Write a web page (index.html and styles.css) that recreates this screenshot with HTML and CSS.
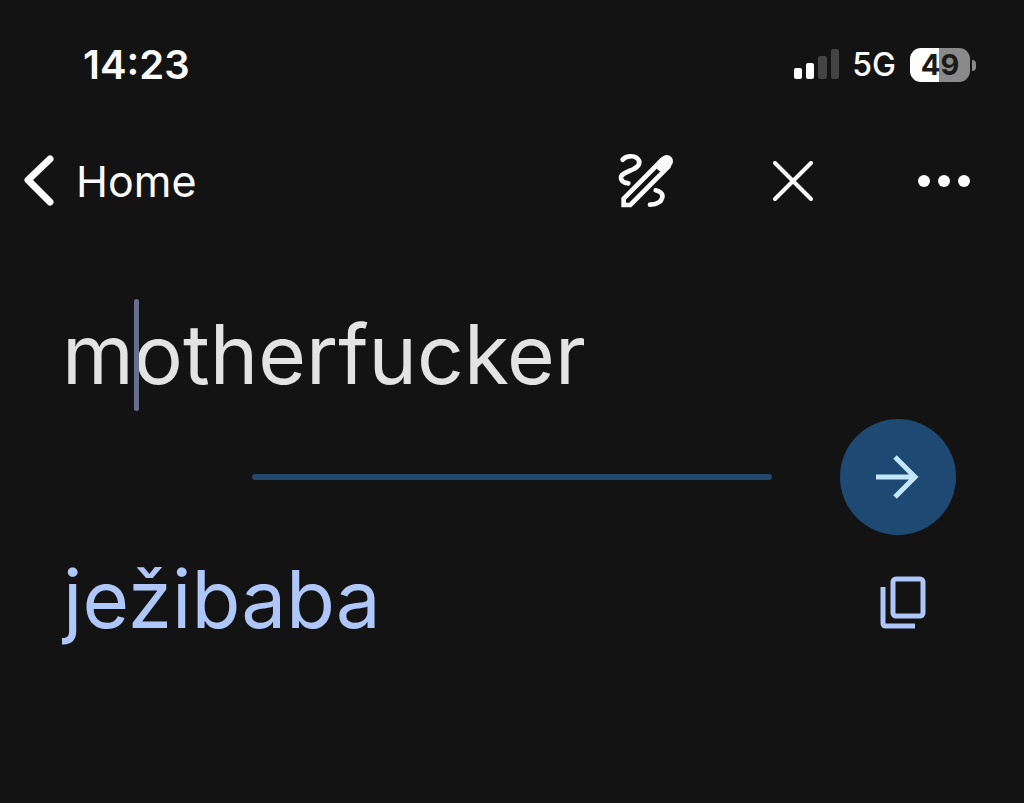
FILE: index.html
```html
<!DOCTYPE html>
<html lang="en">
<head>
  <meta charset="UTF-8" />
  <meta name="viewport" content="width=device-width, initial-scale=1.0"/>
  <title>Translate</title>
  <link rel="stylesheet" href="styles.css">
</head>
<body>

  <div class="status-bar">
    <time class="clock">14:23</time>
    <div class="status-icons">
      <svg class="signal" viewBox="0 0 46 32" aria-hidden="true">
        <rect x="0" y="19" width="8" height="11" rx="2" fill="#fff"/>
        <rect x="12" y="14" width="8" height="16" rx="2" fill="#fff"/>
        <rect x="24" y="7" width="9" height="23" rx="2" fill="#444"/>
        <rect x="37" y="0" width="8" height="30" rx="2" fill="#444"/>
      </svg>
      <span class="network">5G</span>
      <span class="battery">49</span>
    </div>
  </div>

  <nav class="nav-bar">
    <a class="back-link" href="#">
      <svg class="chevron" viewBox="0 0 32 52" aria-hidden="true">
        <path d="M28 4 L6 25 L28 47"/>
      </svg>
      Home
    </a>
    <button class="icon-btn" aria-label="Handwriting">
      <svg class="pen" viewBox="45 33 180 180" aria-hidden="true">
        <path d="M68 59 C78 48 99 46 109 53 C124 64 119 79 101 87 C82 96 62 101 63 114 C64 124 74 129 85 130"/>
        <path d="M167 151 C181 154 189 162 187 172 C184 187 169 193 150 194"/>
        <path class="pencil" d="M186 60 L71 176 V195 H91 L206 79"/>
        <path class="tip" d="M187 76 L200 64"/>
      </svg>
    </button>
    <button class="icon-btn" aria-label="Clear">
      <svg class="cross" viewBox="0 0 40 40" aria-hidden="true">
        <path d="M2 2 L38 38 M38 2 L2 38"/>
      </svg>
    </button>
    <button class="icon-btn" aria-label="More">
      <svg class="dots" viewBox="0 0 52 12" aria-hidden="true">
        <circle cx="6" cy="6" r="6"/>
        <circle cx="26" cy="6" r="6"/>
        <circle cx="46" cy="6" r="6"/>
      </svg>
    </button>
  </nav>

  <main>
    <div class="source">
      <input class="source-text" type="text" value="motherfucker" aria-label="Text to translate">
      <span class="caret"></span>
    </div>

    <div class="divider-row">
      <hr class="divider">
      <button class="go-btn" aria-label="Translate">
        <svg class="arrow" viewBox="0 0 44 44" aria-hidden="true">
          <path d="M0 22 H38 M19 2 L39 22 L19 42"/>
        </svg>
      </button>
    </div>

    <div class="result">
      <p class="result-text" lang="sk">ježibaba</p>
      <button class="copy-btn" aria-label="Copy translation">
        <svg class="copy" viewBox="0 0 46 54" aria-hidden="true">
          <rect x="13" y="4" width="30" height="37" rx="3"/>
          <path d="M3 12 V48 Q3 51 6 51 H35"/>
        </svg>
      </button>
    </div>
  </main>

</body>
</html>
```
FILE: styles.css
```css
:root {
  --bg-color: #131313;
  --text-color: #e3e3e3;
  --icon-color: #fafafa;
  --accent: #1d4973;
  --accent-text: #c2e7ff;
  --result-color: #aec6f8;
}

* { box-sizing: border-box; margin: 0; padding: 0; }

body {
  font-family: Inter, sans-serif;
  background: var(--bg-color);
  color: var(--icon-color);
  min-height: 100vh;
}

button {
  background: none;
  border: none;
  cursor: pointer;
}

svg {
  display: block;
  fill: none;
  stroke: currentColor;
}

.status-bar {
  display: flex;
  align-items: center;
  justify-content: space-between;
  height: 129px;
  padding: 0 48px 0 83px;
}

.clock {
  font-size: 40px;
  font-weight: 600;
}

.status-icons {
  display: flex;
  align-items: center;
  gap: 14px;
}

.signal {
  width: 46px;
  height: 32px;
  margin-right: -2px;
  stroke: none;
}

.network {
  font-size: 32px;
  font-weight: 500;
}

.battery {
  position: relative;
  width: 60px;
  height: 34px;
  margin-right: 6px;
  border-radius: 11px;
  background: linear-gradient(to right, #fff 49%, #8a8a8a 49%);
  color: #1a1a1a;
  font-size: 29px;
  font-weight: 700;
  line-height: 34px;
  text-align: center;
}

.battery::after {
  content: "";
  position: absolute;
  top: 12px;
  right: -6px;
  width: 4px;
  height: 11px;
  border-radius: 0 4px 4px 0;
  background: #8a8a8a;
}

.nav-bar {
  display: flex;
  align-items: center;
  height: 104px;
  padding: 0 30px 0 22px;
}

.back-link {
  display: flex;
  align-items: center;
  gap: 22px;
  margin-right: auto;
  color: var(--icon-color);
  font-size: 43px;
  text-decoration: none;
}

.chevron {
  width: 32px;
  height: 52px;
  stroke-width: 7;
  stroke-linecap: round;
  stroke-linejoin: round;
}

.icon-btn {
  display: flex;
  align-items: center;
  justify-content: center;
  width: 100px;
  height: 60px;
  margin-left: 48px;
  color: var(--icon-color);
}

.icon-btn:last-child { margin-left: 51px; }

.pen {
  width: 60px;
  height: 60px;
  stroke-width: 14;
  stroke-linecap: round;
}

.tip { stroke-width: 38; }

.cross {
  width: 40px;
  height: 40px;
  stroke-width: 4;
  stroke-linecap: round;
}

.dots {
  width: 52px;
  height: 12px;
  fill: currentColor;
  stroke: none;
}

.source {
  position: relative;
  padding: 66px 62px 8px;
}

.source-text {
  display: block;
  width: 100%;
  height: 112px;
  padding-bottom: 2px;
  background: none;
  border: none;
  outline: none;
  color: var(--text-color);
  font-family: inherit;
  font-size: 82px;
}

.caret {
  position: absolute;
  top: 66px;
  left: 134px;
  width: 5px;
  height: 112px;
  border-radius: 3px;
  background: #666f8c;
}

.divider-row {
  display: flex;
  align-items: center;
  gap: 68px;
  padding: 0 68px 0 252px;
}

.divider {
  flex: 1;
  height: 6px;
  border: none;
  border-radius: 3px;
  background: #22496c;
}

.go-btn {
  display: flex;
  align-items: center;
  justify-content: center;
  width: 116px;
  height: 116px;
  border-radius: 50%;
  background: var(--accent);
  color: var(--accent-text);
}

.arrow {
  width: 44px;
  height: 44px;
  stroke-width: 5;
}

.result {
  display: flex;
  align-items: flex-start;
  justify-content: space-between;
  padding: 8px 98px 0 63px;
  color: var(--result-color);
}

.result-text {
  font-size: 80px;
  line-height: 112px;
}

.copy-btn {
  padding: 32px 0;
  color: inherit;
}

.copy {
  width: 46px;
  height: 54px;
  stroke-width: 5;
}
```
